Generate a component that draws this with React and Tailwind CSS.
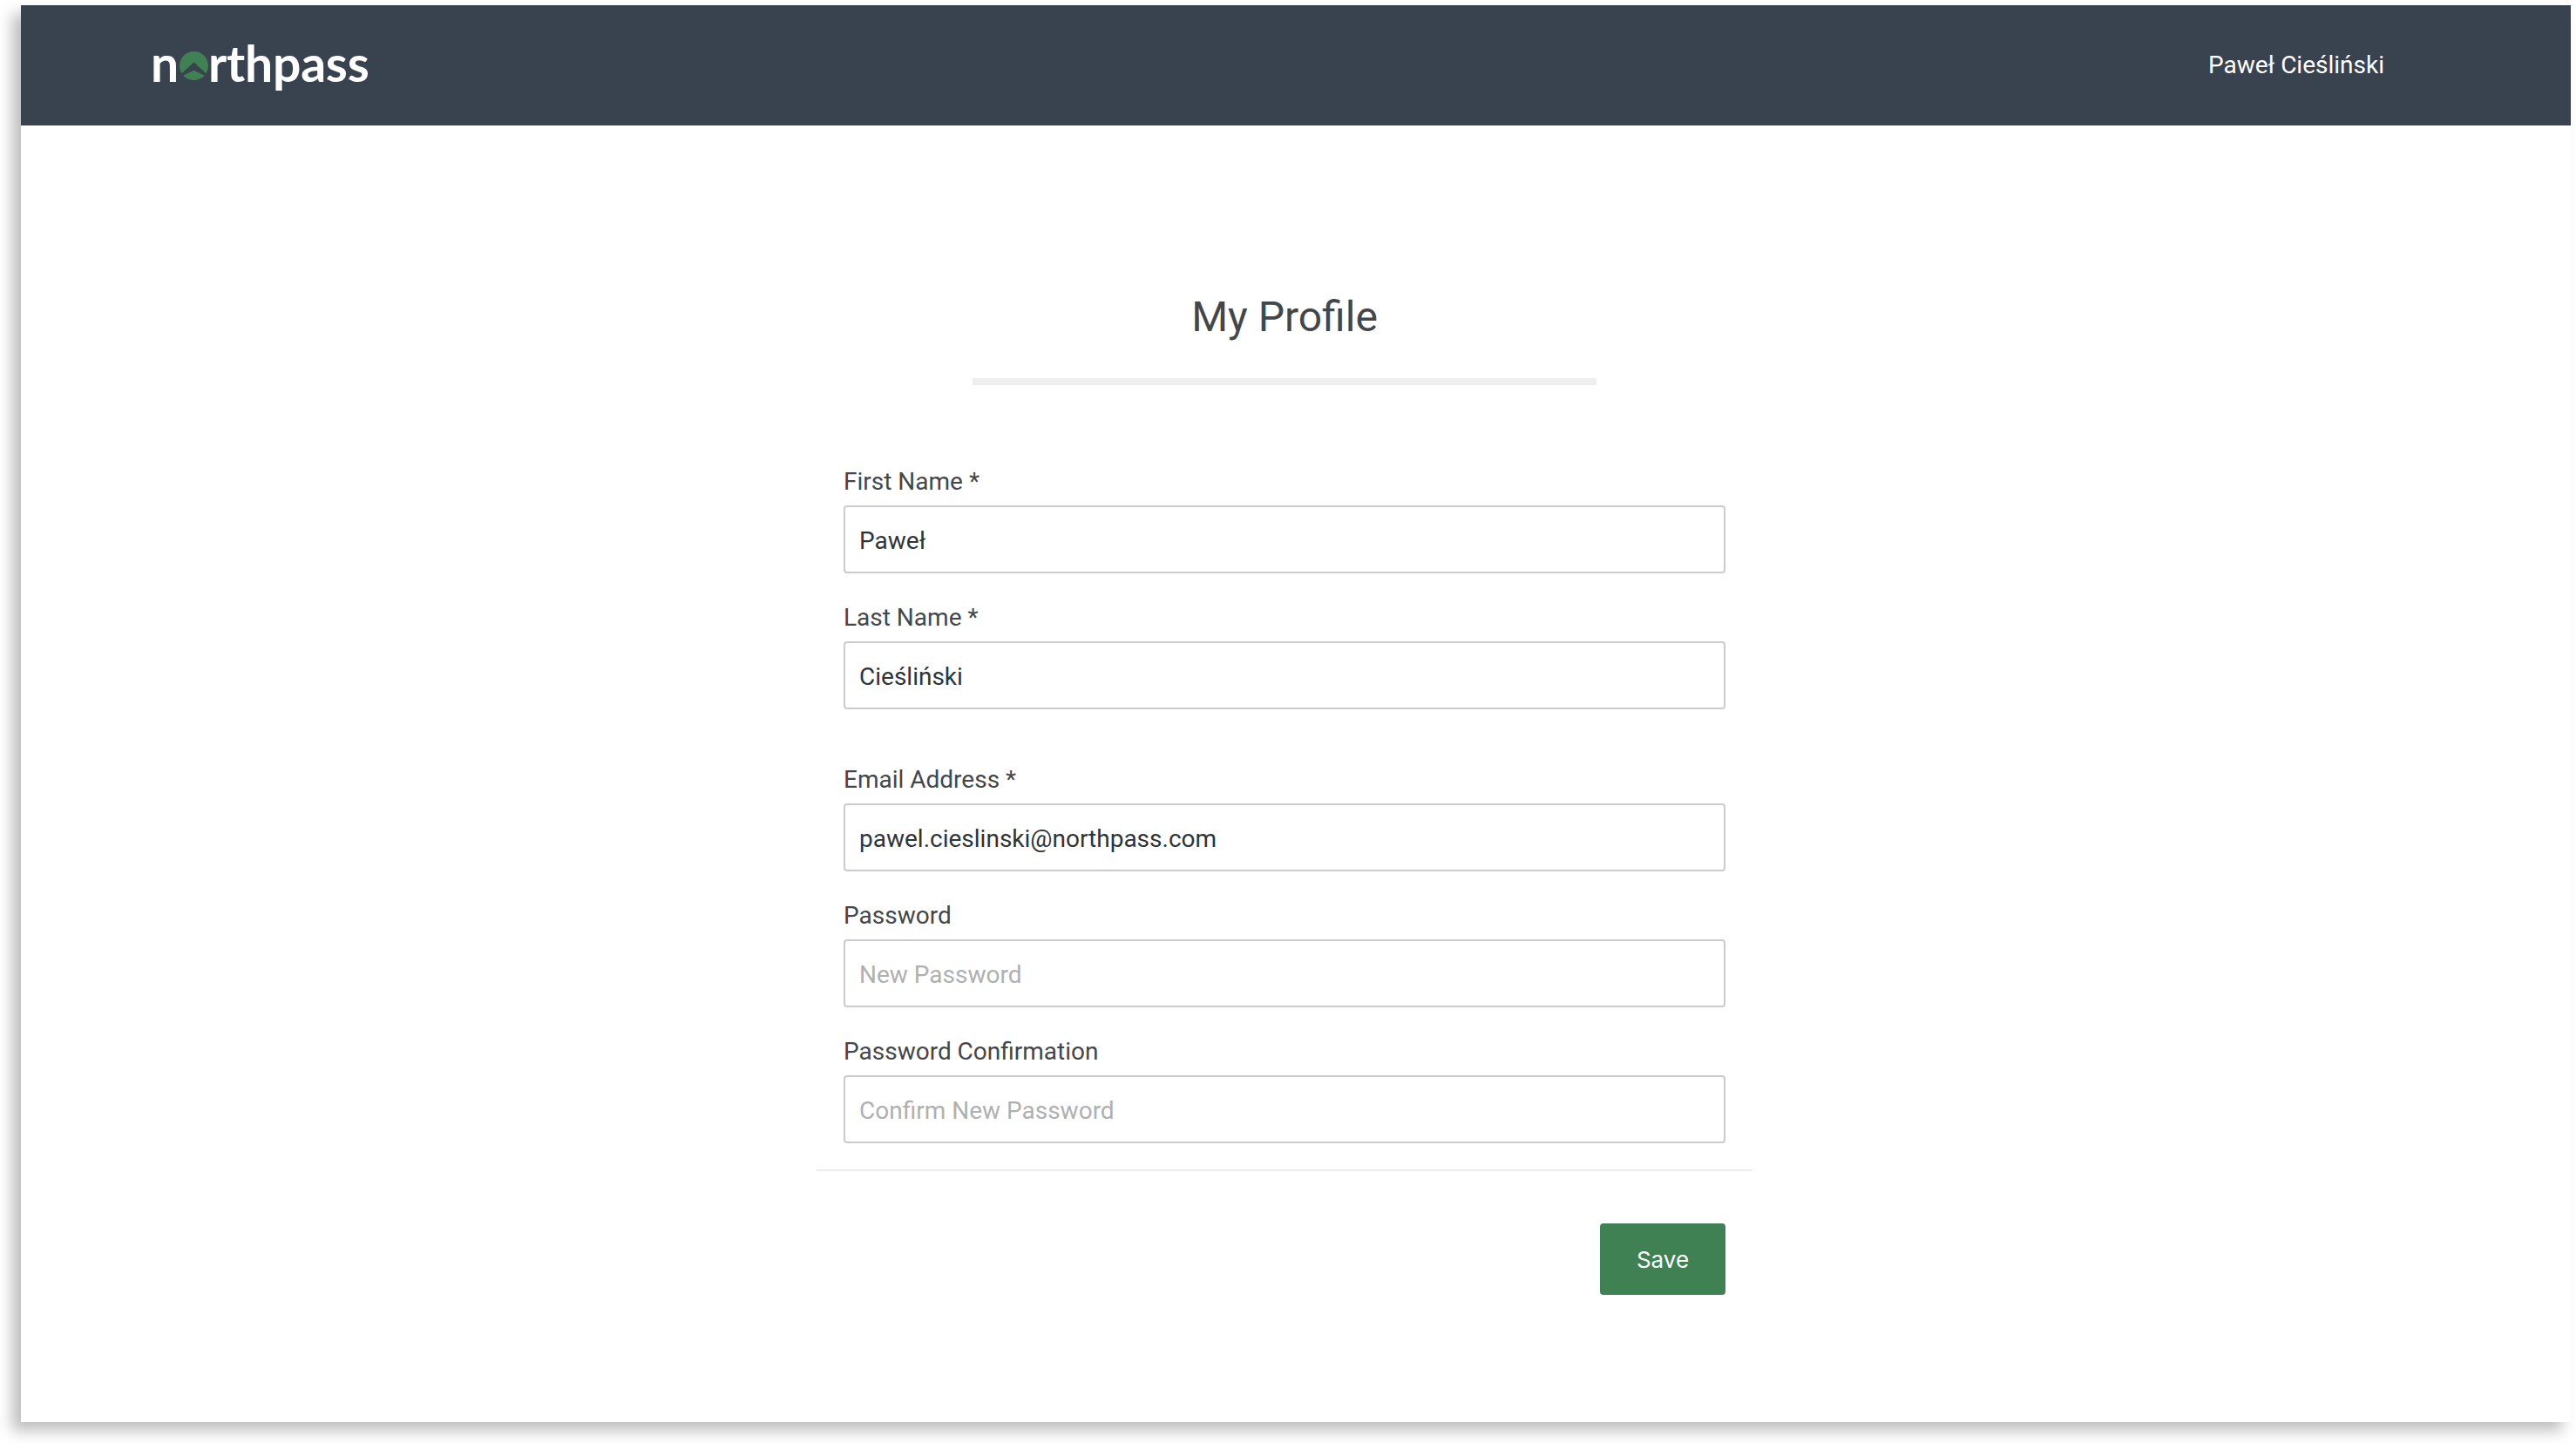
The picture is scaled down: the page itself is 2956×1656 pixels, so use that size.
import React from 'react';

const FIELDS = [
  { label: 'First Name *', value: 'Paweł', type: 'text' },
  { label: 'Last Name *', value: 'Cieśliński', type: 'text' },
  { label: 'Email Address *', value: 'pawel.cieslinski@northpass.com', type: 'email', gap: true },
  { label: 'Password', placeholder: 'New Password', type: 'password' },
  { label: 'Password Confirmation', placeholder: 'Confirm New Password', type: 'password' },
];

const LogoMark = () => (
  <svg viewBox="0 0 32 32" className="w-[33px] h-[33px] ml-[1px] mr-[0px] mt-[6px] shrink-0">
    <circle cx="16" cy="16" r="16" fill="#3f8153" />
    <path d="M16 12 L30 25 L28 27 L16 21 L4 27 L2 25 Z" fill="#39424f" />
  </svg>
);

const Logo = () => (
  <div className="flex items-center h-[70px] pb-[6px] text-white font-['Lato',sans-serif] font-bold text-[57px] leading-none tracking-[-0.2px]">
    <span>n</span>
    <LogoMark />
    <span>rthpass</span>
  </div>
);

const Field = ({ label, value, placeholder, type, gap }) => (
  <div className={gap ? 'mt-[60px] mb-[30px]' : 'mb-[30px]'}>
    <label className="block h-[48px] leading-[42px] text-[28px] text-[#43474a]">{label}</label>
    <input
      type={type === 'password' ? 'text' : type}
      readOnly
      defaultValue={value}
      placeholder={placeholder}
      className="block w-full h-[78px] px-[16px] pt-[2px] bg-white border-2 border-[#cbcbcb] rounded-[4px] text-[28px] text-[#2f3437] placeholder:text-[#b0b0b0] outline-none"
    />
  </div>
);

export default function App() {
  return (
    <div className="min-h-screen bg-white pt-[6px] pl-[24px] font-['Roboto',sans-serif]">
      <div className="w-[2926px] h-[1626px] flex flex-col bg-white shadow-[-10px_10px_16px_rgba(0,0,0,0.26)]">
        {/* Header */}
        <header className="h-[138px] shrink-0 flex items-center justify-between pl-[149px] pr-[214px] bg-[#39424f]">
          <Logo />
          <span className="text-[28px] text-white">Paweł Cieśliński</span>
        </header>

        {/* Form */}
        <main className="w-[1074px] ml-[913px]">
          <h1 className="mt-[190px] text-center text-[48px] leading-[60px] font-normal text-[#43474a]">My Profile</h1>
          <div className="w-[716px] h-[8px] mx-auto mt-[40px] bg-[#eeeeee]" />
          <form className="mt-[90px]">
            <div className="px-[31px]">
              {FIELDS.map((field) => (
                <Field key={field.label} {...field} />
              ))}
            </div>
            <div className="h-[2px] bg-[#ececec]" />
            <div className="flex justify-end px-[31px] mt-[60px]">
              <button type="button" className="w-[144px] h-[82px] bg-[#3f8153] rounded-[4px] text-[26px] text-white font-['Inter',sans-serif]">
                Save
              </button>
            </div>
          </form>
        </main>
      </div>
    </div>
  );
}
